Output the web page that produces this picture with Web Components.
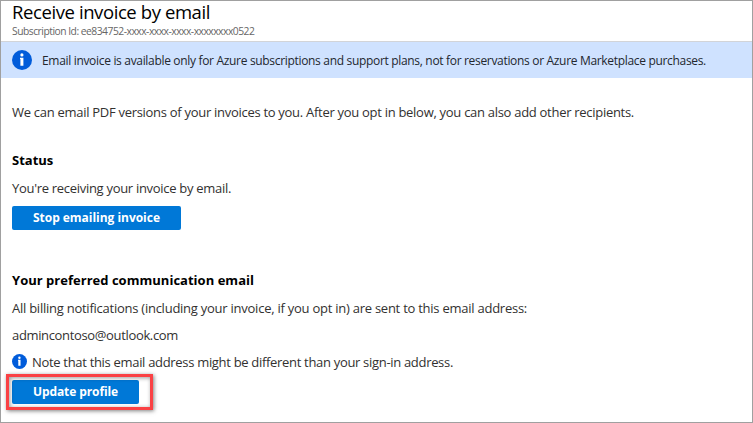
<!DOCTYPE html>
<html lang="en">
<head>
<meta charset="utf-8">
<title>Receive invoice by email</title>
<style>
body { margin: 0; font-family: "Open Sans", "Noto Sans", sans-serif; color: #323130; }
</style>
</head>
<body>
<invoice-page></invoice-page>

<template id="icon-tpl">
  <style>
    :host { display: block; flex: none; width: 20px; height: 20px; }
    svg { display: block; width: 100%; height: 100%; }
  </style>
  <svg viewBox="0 0 20 20" aria-hidden="true">
    <circle cx="10" cy="10" r="10" fill="#015cda"/>
    <circle cx="9.9" cy="4.9" r="1.6" fill="#fff"/>
    <path d="M8 7.8h3.4v8H8.4V9.1H8z" fill="#fff"/>
  </svg>
</template>

<template id="button-tpl">
  <style>
    :host { display: block; width: max-content; }
    button { display: block; box-sizing: border-box; width: var(--w); height: 24px; margin: 0; padding: 0 0 1px 21px;
      border: 0; border-radius: 2px; background: #0078d7; color: #fff; text-align: left; white-space: nowrap;
      font: 700 12px/23px "Open Sans", "Noto Sans", sans-serif; letter-spacing: var(--ls, 0); }
  </style>
  <button type="button"><slot></slot></button>
</template>

<template id="line-tpl">
  <style>
    :host { display: block; height: 20px; font-size: 13px; line-height: 20px; white-space: nowrap; letter-spacing: var(--ls, 0); }
    :host([heading]) { font-weight: 700; color: #000; }
  </style>
  <slot></slot>
</template>

<template id="banner-tpl">
  <style>
    :host { display: flex; align-items: center; gap: 10px; box-sizing: border-box; height: 37px; padding: 0 11px;
      border-top: 1px solid #d2d4d8; background: #cfe2ff; font-size: 12px; line-height: 20px;
      white-space: nowrap; letter-spacing: -.32px; color: #23272e; }
    span { padding-top: 2px; }
  </style>
  <info-icon></info-icon><span><slot></slot></span>
</template>

<template id="highlight-tpl">
  <style>
    :host { display: block; position: relative; width: max-content; }
    i { position: absolute; left: -6px; top: -6px; width: 147px; height: 36px; box-sizing: border-box;
      border: 3px solid #fa4144; box-shadow: 1px 1px 4px rgba(0,0,0,.5), inset 1px 1px 4px rgba(0,0,0,.4); pointer-events: none; }
  </style>
  <slot></slot><i></i>
</template>

<template id="page-tpl">
  <style>
    :host { display: block; box-sizing: border-box; width: 753px; height: 423px; border: 1px solid #a0a0a0; background: #fff; overflow: hidden; }
    header { height: 40px; padding-left: 11px; box-sizing: border-box; white-space: nowrap; }
    h1 { margin: 0; font-size: 18.5px; font-weight: 400; line-height: 22px; letter-spacing: -.408px; color: #000; }
    p { margin: 0; padding-top: 1px; font-size: 10.3px; line-height: 14px; letter-spacing: -.497px; color: #666; }
    main { padding: 24px 11px 0; display: grid; justify-items: start; }
    .status, .email { display: grid; justify-items: start; }
    .status { padding-top: 28px; row-gap: 8px; }
    .email { padding-top: 40px; }
    .all { margin-top: 8px; }
    .addr { margin-top: 7px; }
    .note { display: flex; align-items: center; gap: 5px; margin-top: 7px; }
    .note info-icon { width: 15px; height: 15px; margin-bottom: 1px; }
    info-highlight { margin-top: 8px; }
  </style>
  <header>
    <h1>Receive invoice by email</h1>
    <p>Subscription Id: ee834752-xxxx-xxxx-xxxx-xxxxxxxx0522</p>
  </header>
  <info-banner>Email invoice is available only for Azure subscriptions and support plans, not for reservations or Azure Marketplace purchases.</info-banner>
  <main>
    <text-line style="--ls:-.288px">We can email PDF versions of your invoices to you. After you opt in below, you can also add other recipients.</text-line>
    <section class="status">
      <text-line heading>Status</text-line>
      <text-line style="--ls:-.298px">You're receiving your invoice by email.</text-line>
      <action-button style="--w:169px;--ls:-.03px">Stop emailing invoice</action-button>
    </section>
    <section class="email">
      <text-line heading style="--ls:.021px">Your preferred communication email</text-line>
      <text-line class="all" style="--ls:-.248px">All billing notifications (including your invoice, if you opt in) are sent to this email address:</text-line>
      <text-line class="addr" style="--ls:-.346px">admincontoso@outlook.com</text-line>
      <div class="note"><info-icon></info-icon><text-line style="--ls:-.313px">Note that this email address might be different than your sign-in address.</text-line></div>
      <info-highlight><action-button style="--w:127px;--ls:-.1px">Update profile</action-button></info-highlight>
    </section>
  </main>
</template>

<script>
function define(name, templateId) {
  customElements.define(name, class extends HTMLElement {
    constructor() {
      super();
      this.attachShadow({ mode: 'open' })
        .append(document.getElementById(templateId).content.cloneNode(true));
    }
  });
}
define('info-icon', 'icon-tpl');
define('action-button', 'button-tpl');
define('text-line', 'line-tpl');
define('info-banner', 'banner-tpl');
define('info-highlight', 'highlight-tpl');
define('invoice-page', 'page-tpl');
</script>
</body>
</html>
